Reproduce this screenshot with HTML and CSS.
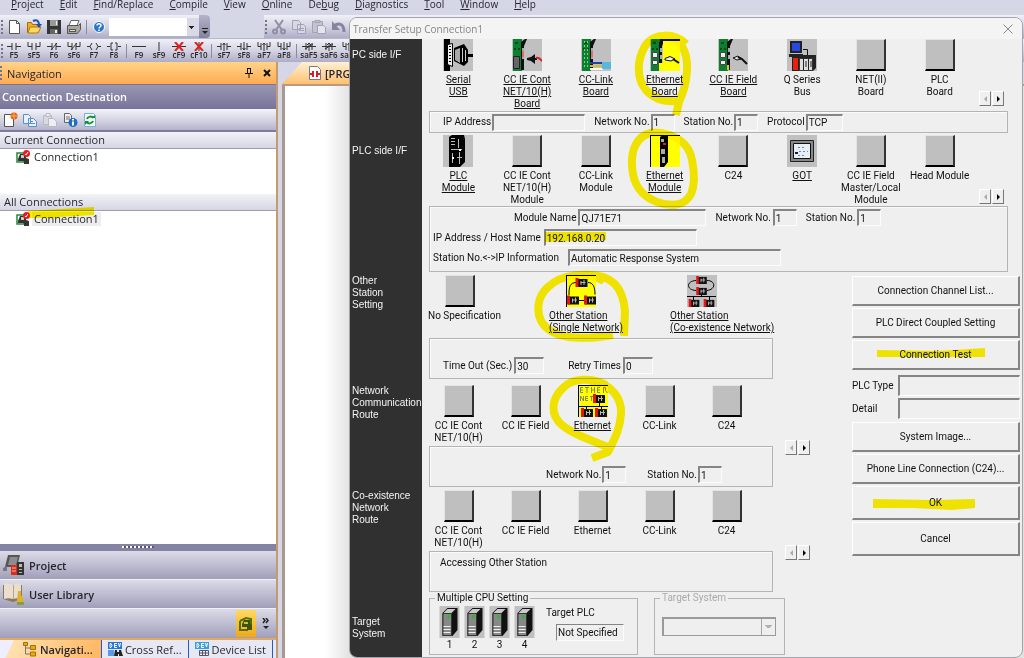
FILE: index.html
```html
<!DOCTYPE html>
<html lang="en">
<head>
<meta charset="utf-8">
<title>Transfer Setup</title>
<link rel="stylesheet" href="styles.css">
</head>
<body>
<svg class="defs" aria-hidden="true">
  <symbol id="no" viewBox="0 0 14 9"><path d="M0 4.500h5M9 4.500h5M5 1v7M9 1v7"/></symbol>
  <symbol id="por" viewBox="0 0 14 9"><path d="M1 0v4.500h4M9 4.500h4V0M5 1v7M9 1v7"/></symbol>
  <symbol id="nc" viewBox="0 0 14 9"><path d="M0 4.500h5M9 4.500h5M5 1v7M9 1v7M4 8l6-7"/></symbol>
  <symbol id="pnc" viewBox="0 0 14 9"><path d="M1 0v4.500h4M9 4.500h4V0M5 1v7M9 1v7M4 8l6-7"/></symbol>
  <symbol id="coil" viewBox="0 0 14 9"><path d="M0 4.500h3M11 4.500h3M5 1L3 4.500L5 8M9 1l2 3.500L9 8"/></symbol>
  <symbol id="brk" viewBox="0 0 14 9"><path d="M0 4.500h3M11 4.500h3M6 1H4v7h2M8 1h2v7H8"/></symbol>
  <symbol id="hl" viewBox="0 0 14 9"><path d="M0 4.500h14"/></symbol>
  <symbol id="vl" viewBox="0 0 14 9"><path d="M7 0v9"/></symbol>
  <symbol id="dx" viewBox="0 0 14 9"><path d="M0 4.500h14"/><path class="red" d="M3 0l8 9M11 0L3 9"/></symbol>
  <symbol id="vx" viewBox="0 0 14 9"><path d="M7 0v9"/><path class="red" d="M3 0l8 9M11 0L3 9"/></symbol>
  <symbol id="up" viewBox="0 0 14 9"><path d="M0 4.500h4M10 4.500h4M4 1v7M10 1v7M7 1v8M5.500 3L7 1l1.500 2"/></symbol>
  <symbol id="dn" viewBox="0 0 14 9"><path d="M0 4.500h4M10 4.500h4M4 1v7M10 1v7M7 0v8M5.500 6L7 8l1.500-2"/></symbol>
  <symbol id="pup" viewBox="0 0 14 9"><path d="M1 0v4.500h3M10 4.500h3V0M4 1v7M10 1v7M7 1v8M5.500 3L7 1l1.500 2"/></symbol>
  <symbol id="pdn" viewBox="0 0 14 9"><path d="M1 0v4.500h3M10 4.500h3V0M4 1v7M10 1v7M7 0v8M5.500 6L7 8l1.500-2"/></symbol>
  <symbol id="nup" viewBox="0 0 14 9"><path d="M0 4.500h14M4 1v7M10 1v7M7 1v8M5 3L7 1l2 2M3 7l8-5"/></symbol>
  <symbol id="link" viewBox="0 0 14 14"><path fill="#fff" stroke="#28863c" stroke-width="1.500" d="M1 3h7v9H1z"/><path fill="#333" d="M2 9l2-5h6v4l3 1v5H8v-3H2z"/><path fill="#ccc" d="M5 5h3v3H5z"/><circle cx="10.500" cy="3.500" r="3.500" fill="#e81e1e"/><path d="M9 4l1 1 2-3" stroke="#fff" fill="none"/></symbol>
  <symbol id="plc" viewBox="0 0 12 9"><path fill="#111" d="M1 1h11v8H1z"/><path fill="#e01818" d="M0 0h3v9H0z"/><path stroke="#bbb" d="M5.500 3v4M8.500 2v5M5 4.500h5"/></symbol>
  <symbol id="cpu" viewBox="0 0 20 32"><path fill="#c0c0c0" d="M0 0h20v32H0z"/><path fill="#111" d="M3 7l5-5h10v22l-5 6H3z"/><path fill="#888" stroke="#333" d="M3.500 7.500H12v22H3.500z"/><path fill="#ccc" d="M4 7l4-4h8l-4 4z"/><path fill="#20c020" d="M8 9h2v4H8z"/><path stroke="#eee" d="M4 20.500h7M4 23.500h7M4 26.500h7"/></symbol>
  <symbol id="board" viewBox="0 0 30 32"><path fill="#c0c0c0" d="M0 0h30v32H0z"/><path fill="#0b8030" d="M1 0h9v32H1z"/><path fill="#111" d="M9 3l4-3h2l-3 7v24H9z"/><path fill="#aaa" d="M10 9h2v4h-2zM10 16h2v4h-2z"/><path fill="#064d1c" d="M3 3h3v2H3zM2 9h2v2H2zM6 9h2v2H6z"/></symbol>
  <symbol id="ports" viewBox="0 0 30 32"><path fill="#eee" stroke="#444" d="M2.500 13.500h5v5h-5zM2.500 21.500h5v4h-5z"/></symbol>
</svg>

<div class="app">
  <nav class="menu">
    <a href="#"><u>P</u>roject</a><a href="#"><u>E</u>dit</a><a href="#"><u>F</u>ind/Replace</a><a href="#"><u>C</u>ompile</a><a href="#"><u>V</u>iew</a><a href="#"><u>O</u>nline</a><a href="#">De<u>b</u>ug</a><a href="#"><u>D</u>iagnostics</a><a href="#"><u>T</u>ool</a><a href="#"><u>W</u>indow</a><a href="#"><u>H</u>elp</a>
  </nav>

  <div class="bars">
    <div class="bar bar-main">
      <i class="grip"></i>
      <button class="tb" aria-label="New"><svg width="16" height="16"><path fill="#fff" stroke="#555" d="M3.500 1.500h7l3 3v10h-10z"/><path fill="none" stroke="#555" d="M10.500 1.500v3h3"/></svg></button>
      <button class="tb" aria-label="Open"><svg width="16" height="16"><path fill="#f0b020" stroke="#a86c00" d="M1.500 3.500h4l1 2h6v8h-11z"/><path fill="#ffd860" stroke="#b07810" d="M4 8h11l-3 6H2z"/><path fill="none" stroke="#1f4fb0" stroke-width="2" d="M7 2c4-2 6 0 6 4"/><path fill="#1f4fb0" d="M10 5h6l-3 4z"/></svg></button>
      <button class="tb" aria-label="Save"><svg width="16" height="16"><path fill="#34343c" d="M1 1h14v14H1z"/><path fill="#9a9a92" d="M4 1h8v6H4z"/><path fill="#66665c" d="M4 10h8v5H4z"/><path fill="#eee" d="M9 11h2v3H9zM10 2h1v4h-1z"/></svg></button>
      <button class="tb" aria-label="Print"><svg width="16" height="16"><path fill="#fff" stroke="#666" d="M5 1.500h8l-2 5H3z"/><path fill="#a8a8a0" stroke="#555" d="M1.500 6.500h11l2-2v6l-3 4h-10z"/><path fill="#555" d="M3 10h7v3H3z"/><path stroke="#ddd" d="M4 11.500h5"/></svg></button>
      <i class="sep"></i>
      <button class="tb" aria-label="Help"><svg width="14" height="14"><circle cx="7" cy="7" r="5.500" fill="#2b74cc" stroke="#fff"/><path fill="none" stroke="#fff" stroke-width="1.500" d="M5 5.500c0-2.500 4-2.500 4 0C9 7 7 7 7 8.500M7 9.500v1.500"/></svg></button>
      <select class="find" aria-label="Find"><option></option></select>
      <button class="more" aria-label="Toolbar options"><svg width="8" height="9"><path stroke="#222" d="M1 2.500h6"/><path fill="#222" d="M1 5h6L4 8z"/></svg></button>
    </div>
    <div class="bar bar-edit">
      <i class="grip"></i>
      <button class="tb" aria-label="Cut"><svg width="16" height="16" fill="none" stroke="#8f8fa5" stroke-width="2"><path d="M4 1l7 10M12 1L5 11"/><circle cx="4" cy="12.500" r="2"/><circle cx="12" cy="12.500" r="2"/></svg></button>
      <button class="tb" aria-label="Copy"><svg width="16" height="16" fill="#d8d8e4" stroke="#a2a2b6"><path d="M1.500 1.500h6l2 2v7h-8zM6.500 5.500h6l2 2v7h-8z"/><path d="M8 9.500h5M8 11.500h5"/></svg></button>
      <button class="tb" aria-label="Paste"><svg width="16" height="16" fill="#c2c2d2" stroke="#a2a2b6"><path d="M1.500 2.500h10v11h-10z"/><path fill="#e4e4ee" d="M6.500 6.500h6l2 2v6h-8z"/><path d="M4 1.500h5v2H4z"/></svg></button>
      <button class="tb" aria-label="Undo"><svg width="16" height="16"><path fill="none" stroke="#8585a0" stroke-width="3" d="M3 7c5-4 10-2 10 6"/><path fill="#8585a0" d="M1 2v9h8z"/></svg></button>
    </div>
  </div>

  <div class="bar ladder">
    <i class="grip"></i>
    <button><svg><use href="#no"/></svg>F5</button><button><svg><use href="#por"/></svg>sF5</button><button><svg><use href="#nc"/></svg>F6</button><button><svg><use href="#pnc"/></svg>sF6</button><button><svg><use href="#coil"/></svg>F7</button><button><svg><use href="#brk"/></svg>F8</button>
    <i class="sep"></i>
    <button><svg><use href="#hl"/></svg>F9</button><button><svg><use href="#vl"/></svg>sF9</button><button><svg><use href="#dx"/></svg>cF9</button><button><svg><use href="#vx"/></svg>cF10</button>
    <i class="sep"></i>
    <button><svg><use href="#up"/></svg>sF7</button><button><svg><use href="#dn"/></svg>sF8</button><button><svg><use href="#pup"/></svg>aF7</button><button><svg><use href="#pdn"/></svg>aF8</button>
    <i class="sep"></i>
    <button><svg><use href="#nup"/></svg>saF5</button><button><svg><use href="#nup"/></svg>saF6</button><button><svg><use href="#pup"/></svg>saF7</button>
  </div>

  <div class="work">
    <aside class="nav">
      <header class="nav-title"><i class="grip"></i><span>Navigation</span>
        <button aria-label="Pin"><svg width="8" height="10"><path fill="none" stroke="#111" d="M2.500 1v4M5.500 1v4M2 .5h4M0 5.500h8M4 6v4"/></svg></button>
        <button aria-label="Close"><svg width="8" height="8"><path stroke="#111" stroke-width="2" d="M1 1l6 6M7 1L1 7"/></svg></button>
      </header>
      <h2 class="nav-head">Connection Destination</h2>
      <div class="nav-tools">
        <button class="tb" aria-label="New connection"><svg width="16" height="16"><path fill="#fff" stroke="#555" d="M2.500 2.500h9v12h-9z"/><circle cx="12" cy="4" r="3.500" fill="#e86010"/><path stroke="#ffb050" d="M12 1v6M9 4h6"/></svg></button>
        <button class="tb" aria-label="Copy"><svg width="16" height="16" fill="#e8f2fc" stroke="#5b8fc8"><path d="M1.500 2.500h5l2 2v7h-7zM6.500 6.500h5l3 3v5h-8z"/><path d="M8 9.500h3M8 11.500h5"/></svg></button>
        <button class="tb" aria-label="Paste"><svg width="16" height="16" fill="#d8d8e2" stroke="#b8b8c8"><path d="M1.500 3.500h8v9h-8z"/><path fill="#eee" d="M6.500 6.500h5l3 3v5h-8zM4 1.500h4v3H4z"/></svg></button>
        <button class="tb" aria-label="Properties"><svg width="16" height="16"><path fill="#eee" stroke="#666" d="M2.500 1.500h5l2 2v7h-7z"/><path stroke="#777" d="M4 5h4M4 7h4"/><circle cx="11" cy="10.500" r="4.500" fill="#1c70c0"/><path stroke="#fff" stroke-width="2" d="M11 7v1.500M11 9.500v4"/></svg></button>
        <button class="tb" aria-label="Refresh"><svg width="16" height="16"><path fill="#eef8ff" stroke="#7ab0d8" d="M2.500 1.500h9l2 2v11h-11z"/><path fill="none" stroke="#189028" stroke-width="2" d="M5 7c1-3 5-3 6-1M11 9c-1 3-5 3-6 1"/><path fill="#189028" d="M9 6h4V3zM3 13v-4h4z"/></svg></button>
      </div>
      <h3 class="list-head">Current Connection</h3>
      <div class="list list-current"><a href="#"><svg width="14" height="14"><use href="#link"/></svg><span>Connection1</span></a></div>
      <h3 class="list-head">All Connections</h3>
      <div class="list list-all"><a href="#" class="sel"><svg width="14" height="14"><use href="#link"/></svg><span>Connection1</span></a></div>
      <div class="split"><i></i></div>
      <button class="shelf"><svg width="24" height="24"><path fill="#555" d="M6 2h12l-3 12H3z"/><path fill="#8d8d90" d="M8 4h8l-2 8H6z"/><path fill="#777" d="M1 15l4-2v5H1z"/><path fill="#d83018" d="M9 12h6v10H9z"/><path fill="#333" d="M15 9h7v13h-7z"/><path fill="#bbb" d="M17 11h3v3h-3zM17 16h3v1h-3zM17 19h3v1h-3z"/><path stroke="#ffb0a0" d="M10 15h4M10 18h4"/></svg>Project</button>
      <button class="shelf"><svg width="24" height="24"><path fill="#8a7860" d="M1 3h19v14l-9 3-10-3z"/><path fill="#eadfce" d="M2 2c4-1 7 0 9 1v14c-3-1-6-1-9 0zM11 3c3-1 5-2 8-1v14c-3 0-5 0-8 1z"/><path stroke="#b8a488" d="M11.500 3v14"/><path fill="#e0b030" d="M16 9h3v4l3 5-2 4h-4l-1-4z"/><path fill="#86a040" d="M15 20h7v3h-7z"/></svg>User Library</button>
      <div class="shelf shelf-foot">
        <button class="pick" aria-label="Connection destination"><svg width="16" height="16"><path fill="none" stroke="#557000" stroke-width="2" d="M2 5l6-3 5 1v6M2 5v9h8"/><path fill="#405010" d="M4 8l2-4h6v4l2 1v5H9v-3H4z"/><path fill="#c8c820" d="M6 6h4v2H6z"/></svg></button>
        <button class="chev" aria-label="More"><svg width="8" height="12"><path fill="none" stroke="#222" stroke-width="1.500" d="M1 0l2 2.500L1 5M4 0l2 2.500L4 5"/><path fill="#222" d="M1 8h6l-3 3z"/></svg></button>
      </div>
      <div class="tabs">
        <button class="tab on"><svg width="16" height="16"><path fill="#e8a818" stroke="#a87000" d="M1.500 1.500h4v3h-4zM8.500 4.500h5v4h-5zM8.500 11h5v4h-5z"/><path fill="none" stroke="#777" d="M3.500 5v8H8M3.500 7H8"/></svg>Navigati...</button>
        <button class="tab"><svg width="16" height="16"><path fill="#2377d8" d="M1 1h14v7H1z"/><path stroke="#fff" fill="none" d="M3 2.500v4h1l1-2-1-2zM10 2.500H7.500v4H10M7 4.500h3M11.500 2l1 4 1-4"/><path fill="#5a9ae8" d="M1 9h6v6H1z"/><path fill="#222" d="M8 9h2v2h2V9h2l2 6h-4v-2h-1v2H7z"/></svg>Cross Ref...</button>
        <button class="tab"><svg width="16" height="16"><path fill="#38a0e0" d="M1 1h14v7H1z"/><path stroke="#fff" fill="none" d="M3 2.500v4h1l1-2-1-2zM10 2.500H7.500v4H10M7 4.500h3M11.500 2l1 4 1-4"/><path fill="#eef" stroke="#556" d="M5.500 9.500h9v5h-9zM8.500 9v6M11.500 9v6M5 12h10"/></svg>Device List</button>
      </div>
    </aside>
    <main class="doc">
      <div class="doc-tabs"><div class="doc-tab"><svg width="12" height="14"><path fill="#fff" stroke="#778" d="M.5.5h8l3 3v10H.5z"/><path stroke="#d82020" stroke-width="2" d="M4 5v6M8 5v6M1 8h3M8 8h3"/></svg>[PRG</div></div>
      <div class="page"></div>
    </main>
  </div>
</div>

<section class="dialog" role="dialog" aria-label="Transfer Setup Connection1">
  <header class="dlg-title"><span>Transfer Setup Connection1</span><button aria-label="Close"><svg width="10" height="10"><path stroke="#888" d="M.5.5l9 9M9.500.5l-9 9"/></svg></button></header>

  <div class="sec s1">
    <div class="side">PC side I/F</div>
    <div class="cont">
      <div class="wide">
        <div class="icons">
          <button class="item u"><svg class="pic"><path fill="#c0c0c0" d="M0 0h30v32H0z"/><path fill="#000" d="M1 0h6v32H1zM11 9l10-4 4 6v12l-4 4-10-5zM25 15h5v3h-5z"/><path fill="#eee" stroke="#000" d="M4.500 5.500l5-1v23l-5-2z"/><path fill="#aaa" d="M12 11l5-2v15l-5-3z"/><path stroke="#000" stroke-dasharray="1 2" stroke-width="2" d="M7 7v17"/><path stroke="#ccc" fill="none" d="M19.500 9v14M22.500 11v11"/></svg>Serial<br>USB</button>
          <button class="item u"><svg class="pic"><use href="#board"/><path fill="#666" stroke="#222" d="M1.500 17.500h6v12h-6z"/><path fill="#111" d="M15 19l4-1 4-3v4h2v2h-2v4l-4-3-4-1z"/><path fill="none" stroke="#e02020" stroke-width="2" d="M24 19c3-1 4 1 6 3"/><path fill="#e66" d="M10 12h2v6h-2z"/></svg>CC IE Cont<br>NET/10(H)<br>Board</button>
          <button class="item u"><svg class="pic"><use href="#board"/><path stroke="#8c8" stroke-dasharray="2 2" d="M3.500 2v28M6.500 2v28"/><path stroke="#2040b0" stroke-width="2" d="M9 24h13"/><path stroke="#d8c020" stroke-width="2" d="M9 27h13"/><path stroke="#fff" stroke-width="2" d="M9 30h13"/><path fill="#58b8dc" d="M21 23h9v7h-9z"/><path fill="#e66" d="M10 12h2v6h-2z"/></svg>CC-Link<br>Board</button>
          <button class="item u"><svg class="pic"><use href="#board"/><use href="#ports"/><path fill="#ff0" d="M13 2h17v30H13z"/><path fill="#111" d="M10 0h20v2H10z"/><path fill="#ff0" d="M9 24h4v8H9z"/><path fill="#eee" stroke="#111" d="M15 19.500l5-2 5 2.500-4 2-6-1z"/><path fill="none" stroke="#111" stroke-width="2" d="M23 20l6 4"/></svg>Ethernet<br>Board</button>
          <button class="item u"><svg class="pic"><use href="#board"/><use href="#ports"/><path fill="#eee" stroke="#111" d="M15 19l5-2 3 3-4 1z"/><path fill="none" stroke="#111" stroke-width="2" d="M20 18l4 2 5 5"/><path fill="#e8c020" d="M9 26h2v5H9z"/></svg>CC IE Field<br>Board</button>
          <button class="item"><svg class="pic"><path fill="#c0c0c0" d="M0 0h30v32H0z"/><path fill="#222" d="M3 2h12v12H3zM2 15h14v3H2z"/><path fill="#2848e0" d="M5 4h8v8H5z"/><path fill="none" stroke="#111" d="M16 10.500h4.500V17"/><path fill="#222" d="M5 18l3-2h21v13l-3 3H5z"/><path fill="#ddd" stroke="#333" d="M12.500 19.500h13v12h-13z"/><path fill="#e82010" d="M6 19h5v12H6z"/><path stroke="#222" d="M16.500 19v12M21.500 19v12M19 22v6M24 22v6"/></svg>Q Series<br>Bus</button>
          <button class="item"><i class="blank"></i>NET(II)<br>Board</button>
          <button class="item"><i class="blank"></i>PLC<br>Board</button>
        </div>
        <div class="pager"><button disabled aria-label="Previous"><i class="l"></i></button><button aria-label="Next"><i class="r"></i></button></div>
      </div>
      <div class="box b1">
        <label>IP Address<input class="w92"></label><label>Network No.<input class="w24" value="1"></label><label>Station No.<input class="w24" value="1"></label><label>Protocol<input class="w36" value="TCP"></label>
      </div>
    </div>
  </div>

  <div class="sec s2">
    <div class="side">PLC side I/F</div>
    <div class="cont">
      <div class="wide">
        <div class="icons">
          <button class="item u"><svg class="pic"><path fill="#c0c0c0" d="M0 0h30v32H0z"/><path fill="#000" d="M6 2l3-2h12l1 4v23l-5 5H6z"/><path fill="none" stroke="#bbb" d="M8 3.500h4M8 6.500h4M8 9.500h4M15.500 4v9M8 14.500h11M9.500 18v10M14 22.500h5M16.500 17v12"/><path fill="#fff" d="M16 14h2v2h-2zM9 22h2v2H9z"/></svg>PLC<br>Module</button>
          <button class="item"><i class="blank"></i>CC IE Cont<br>NET/10(H)<br>Module</button>
          <button class="item"><i class="blank"></i>CC-Link<br>Module</button>
          <button class="item u"><svg class="pic"><path fill="#ff0" d="M0 0h30v32H0z"/><path fill="#000" d="M0 0h30v1H0zM0 0h1v32H0zM10 2l3-2h5v27l-4 5h-4z"/><path fill="#aaa" d="M11 4h3v3h-3zM11 14h4v5h-4zM12 22h3v6h-3z"/><path fill="#e02020" d="M13 8h3v2h-3z"/></svg>Ethernet<br>Module</button>
          <button class="item"><i class="blank"></i>C24</button>
          <button class="item u"><svg class="pic"><path fill="#c0c0c0" d="M0 0h30v32H0z"/><path fill="#888" stroke="#222" d="M3.500 5.500h23v21h-23z"/><path fill="#e8eef4" stroke="#111" d="M6.500 8.500h17v15h-17z"/><path stroke="#68a" stroke-dasharray="2 2" d="M11 12.500h8M12 16.500h9M11 20.500h8"/><path fill="#124" d="M8 17h3v2H8z"/></svg>GOT</button>
          <button class="item"><i class="blank"></i>CC IE Field<br>Master/Local<br>Module</button>
          <button class="item"><i class="blank"></i>Head Module</button>
        </div>
        <div class="pager"><button disabled aria-label="Previous"><i class="l"></i></button><button aria-label="Next"><i class="r"></i></button></div>
      </div>
      <div class="box b2">
        <div class="line line-mod"><label>Module Name<input class="w128" value="QJ71E71"></label><label>Network No.<input class="w24" value="1"></label><label>Station No.<input class="w24" value="1"></label></div>
        <div class="line line-host"><label>IP Address / Host Name<input class="w152" value="192.168.0.20"></label></div>
        <div class="line line-info"><label><span>Station No.&lt;-&gt;IP Information</span><input class="w212" value="Automatic Response System"></label></div>
      </div>
    </div>
  </div>

  <div class="lower">
    <div class="lower-left">
      <div class="sec s3">
        <div class="side">Other<br>Station<br>Setting</div>
        <div class="cont">
          <div class="stations">
            <button class="item"><i class="blank"></i>No Specification</button>
            <button class="item u"><svg class="pic"><path fill="#ff0" d="M0 0h30v32H0z"/><path fill="none" stroke="#000" d="M0 .5h30M.5 0v32M10 7.500C4 8 3 11 3 20M22 7.500c5 0 7 4 7 12M13 25.500h5"/><use href="#plc" x="9" y="3" width="13" height="9"/><use href="#plc" x="1" y="20" width="12" height="10"/><use href="#plc" x="18" y="20" width="12" height="10"/></svg>Other Station<br>(Single Network)</button>
            <button class="item u"><svg class="pic"><path fill="#c0c0c0" d="M0 0h30v32H0z"/><path fill="none" stroke="#000" d="M9 5.500C-1 6-1 15 9 15.500M20 5.500c9 0 9 9 0 10M0 21.500h29M14.500 17v5M6.500 22v3M22.500 22v3"/><use href="#plc" x="8" y="1" width="13" height="8"/><use href="#plc" x="8" y="12" width="13" height="8"/><use href="#plc" x="1" y="24" width="12" height="8"/><use href="#plc" x="16" y="24" width="12" height="8"/></svg>Other Station<br>(Co-existence Network)</button>
          </div>
          <div class="box b3"><label>Time Out (Sec.)<input class="w28" value="30"></label><label>Retry Times<input class="w28" value="0"></label></div>
        </div>
      </div>

      <div class="sec s4">
        <div class="side">Network<br>Communication<br>Route</div>
        <div class="cont">
          <div class="routes">
            <button class="item"><i class="blank"></i>CC IE Cont<br>NET/10(H)</button>
            <button class="item"><i class="blank"></i>CC IE Field</button>
            <button class="item u"><svg class="pic"><path fill="#ff0" d="M0 0h30v32H0z"/><path fill="none" stroke="#000" d="M0 .5h30M.5 0v32M0 21.500h30M21.500 16v6M8.500 21v4M23.500 21v4"/><path fill="none" stroke="#885" d="M5 2.500H2.500v5H5M2 5h3M7 2.500h4M9 2v6M13.500 2v6M16.500 2v6M13 5h4M22 2.500h-2.500v5H22M19 5h3M25.500 8V2.500h2v3l2 2.500M2.500 16v-5l3 5v-5M10 11.500H7.500v4H10M7 13.500h3M12 11.500h3M13.500 11v5"/><use href="#plc" x="15" y="9" width="12" height="9"/><use href="#plc" x="3" y="23" width="12" height="9"/><use href="#plc" x="17" y="23" width="12" height="9"/></svg>Ethernet</button>
            <button class="item"><i class="blank"></i>CC-Link</button>
            <button class="item"><i class="blank"></i>C24</button>
          </div>
          <div class="box b4"><label>Network No.<input class="w24" value="1"></label><label>Station No.<input class="w24" value="1"></label></div>
        </div>
        <div class="pager"><button disabled aria-label="Previous"><i class="l"></i></button><button aria-label="Next"><i class="r"></i></button></div>
      </div>

      <div class="sec s5">
        <div class="side">Co-existence<br>Network<br>Route</div>
        <div class="cont">
          <div class="routes">
            <button class="item"><i class="blank"></i>CC IE Cont<br>NET/10(H)</button>
            <button class="item"><i class="blank"></i>CC IE Field</button>
            <button class="item"><i class="blank"></i>Ethernet</button>
            <button class="item"><i class="blank"></i>CC-Link</button>
            <button class="item"><i class="blank"></i>C24</button>
          </div>
          <div class="box b5">Accessing Other Station</div>
        </div>
        <div class="pager"><button disabled aria-label="Previous"><i class="l"></i></button><button aria-label="Next"><i class="r"></i></button></div>
      </div>

      <div class="sec s6">
        <div class="side">Target<br>System</div>
        <div class="cont">
          <fieldset class="fs-cpu"><legend>Multiple CPU Setting</legend>
            <div class="cpus">
              <button><svg><use href="#cpu"/></svg>1</button><button><svg><use href="#cpu"/></svg>2</button><button><svg><use href="#cpu"/></svg>3</button><button><svg><use href="#cpu"/></svg>4</button>
              <label class="tplc">Target PLC<input value="Not Specified"></label>
            </div>
          </fieldset>
          <fieldset class="fs-sys" disabled><legend>Target System</legend><select aria-label="Target System"><option></option></select></fieldset>
        </div>
      </div>
    </div>

    <div class="actions">
      <button class="btn">Connection Channel List...</button>
      <button class="btn">PLC Direct Coupled Setting</button>
      <button class="btn">Connection Test</button>
      <div class="infos">
        <label class="info"><span>PLC Type</span><input></label>
        <label class="info"><span>Detail</span><input></label>
      </div>
      <button class="btn">System Image...</button>
      <button class="btn">Phone Line Connection (C24)...</button>
      <button class="btn tall">OK</button>
      <button class="btn tall">Cancel</button>
    </div>
  </div>
</section>

<svg class="marker" width="1024" height="658" viewBox="0 0 1024 658" aria-hidden="true">
  <path class="fill" d="M28 211l66-4v8l-36 2-2 1H28zM545 232h61v8l-61 2zM877 350l62 1 46-3v9H877zM873 499l60 1 42-1v9l-24 2-38-2-40 0z"/>
  <path class="pen" d="M686 44c-11-11-32-12-41 2-8 14-9 32 1 44 8 9 19 12 31 11"/>
  <path class="pen" d="M662 36c20 0 26 18 25 34-1 16-4 22-8 32l-3 13"/>
  <path class="pen" d="M692 160c-3-19-22-29-41-27-15 3-20 18-19 33 1 19 9 30 25 36 14 5 28 4 34-8 5-11 3-24 1-34z"/>
  <path class="pen" d="M604 281c-18-10-42-7-56 6-12 11-12 27-5 37 10 13 34 17 70 11"/>
  <path class="pen" d="M580 275c34-3 43 14 45 36l-1 25"/>
  <path class="pen" d="M606 385c-14-8-34-7-43 3-12 11-13 27-1 37 10 9 24 13 38 19l13 5"/>
  <path class="pen" d="M590 381c22 2 32 18 31 33-1 16-7 26-13 38l-16 6"/>
</svg>
</body>
</html>
```
FILE: styles.css
```css
* { box-sizing: border-box; }
body { margin: 0; font-family: "Open Sans", "Noto Sans", sans-serif; font-size: 11px; color: #26262e; }
button, input, select { font: inherit; color: inherit; margin: 0; padding: 0; border: 0; background: none; border-radius: 0; }
h2, h3 { margin: 0; font-size: 11px; font-weight: 400; }
a { color: inherit; text-decoration: none; }
svg { display: block; flex: none; }
.defs { position: absolute; width: 0; height: 0; }

.app { height: 100vh; min-height: 640px; display: flex; flex-direction: column; background: #d5d6e6; overflow: hidden; }
.menu { height: 15px; display: flex; gap: 16px; padding-left: 11px; font-size: 10px; line-height: 8px; }
.bars { display: flex; gap: 54px; height: 23px; }
.bar { display: flex; align-items: center; background: linear-gradient(#f0f0f7, #d4d4e3 50%, #aeadc5); }
.bar-main { width: 210px; border-radius: 0 4px 4px 0; }
.bar-edit { flex: 1; }
.grip { width: 2px; height: 14px; margin: 0 2px 0 1px; background: repeating-linear-gradient(#74748e 0 2px, transparent 2px 4px); flex: none; }
.bar-main .grip { margin-right: 1px; }
.tb { width: 20px; height: 20px; display: grid; place-items: center; flex: none; }
.sep { width: 1px; height: 14px; background: #8a89a2; margin: 0 2px; flex: none; }
.find { width: 90px; height: 18px; appearance: none; background: linear-gradient(#222, #222) 80px 8px / 5px 1px no-repeat, linear-gradient(#222, #222) 81px 9px / 3px 1px no-repeat, linear-gradient(#222, #222) 82px 10px / 1px 1px no-repeat, linear-gradient(90deg, #fff 78px, #d8d8e6 78px); }
.more { width: 11px; align-self: stretch; background: linear-gradient(#b4b3c8, #84839f); display: flex; align-items: flex-end; justify-content: center; padding-bottom: 3px; border-radius: 0 4px 4px 0; margin-left: auto; }
.ladder { height: 24px; border-top: 1px solid #b8b8cc; }
.ladder .grip { margin-right: 1px; }
.ladder button { width: 20px; flex: none; display: flex; flex-direction: column; align-items: center; font-size: 8px; line-height: 8px; font-weight: 600; }
.ladder svg { width: 14px; height: 9px; fill: none; stroke: #333; }
.red { stroke: #e02020; stroke-width: 2; }

.work { flex: 1; display: flex; min-height: 0; }
.nav { width: 278px; display: flex; flex-direction: column; border-right: 2px solid #c59a6c; }
.nav-title { height: 22px; display: flex; align-items: center; gap: 10px; padding-right: 5px; background: linear-gradient(#ffd48a, #ffab52); }
.nav-title .grip { margin: 0 -5px 0 0; }
.nav-title span { flex: 1; }
.nav-head { height: 25px; line-height: 24px; padding-left: 2px; color: #fff; font-weight: 600; background: linear-gradient(#9896b2, #77749a); border-top: 1px solid #77749a; }
.nav-tools { height: 23px; display: flex; align-items: center; background: linear-gradient(#f4f4fa, #cfcfe0 60%, #b4b3ca); border-bottom: 2px solid #7c7a9e; }
.list-head { height: 17px; line-height: 15px; padding-left: 4px; background: linear-gradient(#f2f2f7, #d6d6e4); border-bottom: 1px solid #9c9bb8; }
.list { background: #fff; }
.list-current { height: 45px; }
.list-all { flex: 1; }
.list a { display: flex; align-items: center; gap: 2px; padding-left: 16px; height: 16px; }
.list a span { padding: 0 2px; line-height: 14px; }
.sel span { background: #ededed; }
.split { height: 7px; background: #8583a4; display: flex; justify-content: center; }
.split i { width: 32px; height: 2px; margin-top: 2px; background: repeating-linear-gradient(90deg, #fff 0 2px, #55547a 2px 4px); }
.shelf { height: 29px; display: flex; align-items: center; gap: 3px; padding: 0 8px 0 2px; font-weight: 600; background: linear-gradient(#dcdbe8, #bbbacf 55%, #a09fba); border-bottom: 1px solid #f0f0f6; flex: none; }
.shelf-foot { justify-content: flex-end; gap: 2px; padding-right: 2px; border-bottom: 2px solid #e0a860; height: 31px; }
.pick { width: 20px; height: 27px; display: grid; place-items: center; background: linear-gradient(#ffd860, #f0a818); }
.chev { width: 16px; display: grid; place-items: center; }
.tabs { display: flex; height: 18px; flex: none; background: #e6e8f4; overflow: hidden; }
.tab { display: flex; align-items: center; gap: 2px; padding: 0 6px 0 5px; border-right: 1px solid #2858c8; white-space: nowrap; }
.tab.on { padding-left: 22px; padding-right: 8px; font-weight: 600; background: linear-gradient(115deg, #eef 12px, #ffe0b0 13px, #ffb660); }
.doc { flex: 1; margin-left: 4px; display: flex; flex-direction: column; }
.doc-tabs { height: 24px; display: flex; align-items: flex-end; border-bottom: 2px solid #b89a80; }
.doc-tab { width: 120px; height: 22px; display: flex; align-items: center; gap: 4px; padding-left: 27px; font-weight: 600; background: linear-gradient(#fff0d4, #ffc070); clip-path: polygon(0 100%, 20px 0, 100% 0, 100% 100%); }
.page { flex: 1; border-left: 3px solid #a89890; background: linear-gradient(90deg, #fff 40px, #e0e2e0 66px); }

.dialog { position: absolute; left: 349px; right: 1px; top: 17px; min-height: 640px; background: #efefef; border: 1px solid #a4a4ac; border-radius: 8px; overflow: hidden; font-family: Roboto, "Liberation Sans", sans-serif; font-size: 10px; line-height: 12px; color: #111; display: flex; flex-direction: column; }
.dlg-title { height: 21px; display: flex; justify-content: space-between; align-items: center; padding: 0 9px 0 3px; font-family: "Open Sans", "Noto Sans", sans-serif; color: #868686; background: #f4f4f4; flex: none; }
.sec { display: flex; }
.side { width: 72px; flex: none; background: #303030; color: #f4f4f4; padding-left: 2px; font-family: "Liberation Sans", sans-serif; }
.cont { flex: 1; padding-left: 7px; min-width: 0; }
.s1 { height: 96px; }
.s1 .side, .s2 .side { padding-top: 10px; }
.s2 { height: 140px; }
.s3 { height: 110px; }
.s4 { height: 105px; }
.s5 { height: 102px; }
.s6 { height: 65px; }
.s6 .side { padding-top: 24px; }
.wide { display: flex; gap: 5px; height: 72px; margin-left: -5px; padding-right: 18px; }
.s2 .wide { height: 71px; }
.icons { flex: 1; display: grid; grid-template-columns: repeat(8, minmax(0, 1fr)); }
.item { display: flex; flex-direction: column; align-items: center; justify-content: flex-start; text-align: center; white-space: nowrap; line-height: 12px; }
.u { text-decoration: underline; }
.pic, .blank { width: 30px; height: 32px; margin-bottom: 3px; flex: none; }
.blank { background: #bfbfbf; border: 1px solid #e4e4e4; border-right: 2px solid #333; border-bottom: 2px solid #000; }
.pager { display: flex; gap: 1px; align-self: flex-end; flex: none; }
.wide .pager { margin-bottom: 5px; }
.s2 .pager { margin-bottom: 2px; }
.pager button { width: 12px; height: 15px; display: grid; place-items: center; border: 1px solid #fff; border-right-color: #777; border-bottom-color: #777; }
.pager i { border: 3px solid transparent; width: 0; height: 0; }
.pager .l { border-right-color: #aaa; margin-left: -3px; }
.pager .r { border-left-color: #000; margin-right: -3px; }
.box { border: 1px solid #b4b4b4; box-shadow: inset 1px 1px #fafafa; display: flex; }
.box label { display: flex; align-items: center; gap: 3px; white-space: nowrap; }
input { height: 17px; padding: 0 1px; border: 1px solid #fcfcfc; border-top: 2px solid #858585; border-left: 2px solid #858585; background: #efefef; }
.w24 { width: 24px; } .w28 { width: 30px; } .w36 { width: 37px; } .w92 { width: 93px; } .w128 { width: 128px; } .w152 { width: 153px; } .w212 { width: 213px; }
.b1 { height: 22px; margin-right: 14px; padding-left: 13px; gap: 9px; align-items: center; }
.b1 label { gap: 1px; }
.b2 { height: 66px; margin-right: 14px; flex-direction: column; padding: 2px 0 0 3px; gap: 3px; }
.line { display: flex; gap: 9px; }
.line-mod { padding-left: 81px; }
.line-mod label { gap: 2px; }
.line-info span { width: 132px; }
.lower { display: flex; gap: 41px; }
.lower-left { width: 461px; flex: none; }
.stations { display: grid; grid-template-columns: repeat(3, 121px); height: 63px; margin-left: -1px; }
.stations .item { align-items: flex-start; text-align: left; }
.stations .pic, .stations .blank { margin-left: 17px; }
.s3 .cont, .s4 .cont, .s5 .cont { flex: none; width: 351px; }
.b3 { height: 41px; align-items: flex-end; padding: 0 0 4px 13px; gap: 24px; }
.b3 label { gap: 2px; }
.routes { display: grid; grid-template-columns: repeat(5, 67px); height: 61px; margin-left: -4px; }
.b4 { height: 41px; align-items: flex-end; padding: 0 0 3px 116px; gap: 21px; }
.b4 label { gap: 1px; }
.b5 { height: 41px; padding: 5px 0 0 10px; }
.s4 .pager, .s5 .pager { margin: 0 0 35px 12px; }
.s5 .pager { margin-bottom: 32px; }
.s6 .cont { display: flex; align-items: flex-start; gap: 16px; }
fieldset { margin: 0; padding: 0 0 0 9px; border: 1px solid #b4b4b4; min-width: 0; height: 63px; }
legend { padding: 0 2px; line-height: 12px; }
.fs-cpu { width: 209px; }
.fs-cpu legend, .fs-sys legend { margin-left: -4px; }
.cpus { display: flex; gap: 4px; padding-top: 2px; }
.cpus button { display: flex; flex-direction: column; align-items: center; gap: 1px; }
.cpus svg { width: 21px; height: 32px; }
.tplc { display: flex; flex-direction: column; gap: 5px; margin-left: 7px; padding-top: 1px; }
.tplc input { width: 68px; margin-left: 10px; border-width: 1px; }
.fs-sys { width: 131px; color: #aaa; padding-left: 7px; }
.fs-sys legend { margin-left: -2px; }
.fs-sys select { appearance: none; width: 114px; height: 19px; margin-top: 13px; border: 1px solid #777; border-top-width: 2px; border-left-width: 2px; background: linear-gradient(#999, #999) 101px 6px / 7px 1px no-repeat, linear-gradient(#999, #999) 102px 7px / 5px 1px no-repeat, linear-gradient(#999, #999) 103px 8px / 3px 1px no-repeat, linear-gradient(90deg, transparent 97px, #888 97px 98px, transparent 98px); }
.actions { flex: 1; min-width: 0; display: flex; flex-direction: column; gap: 2px; padding: 1px 2px 0 0; }
.btn { height: 30px; border: 1px solid #fff; border-right: 2px solid #858585; border-bottom: 2px solid #858585; background: #efefef; }
.tall { height: 34px; }
.infos { display: flex; flex-direction: column; gap: 2px; padding: 3px 0 1px; }
.info { display: flex; align-items: center; height: 21px; }
.info span { width: 46px; flex: none; white-space: nowrap; }
.info input { flex: 1; min-width: 0; height: 21px; }

.marker { position: absolute; left: 0; top: 0; pointer-events: none; mix-blend-mode: multiply; }
.fill { fill: #fff200; }
.pen { fill: none; stroke: #fff200; stroke-width: 8px; stroke-linejoin: round; }
```
